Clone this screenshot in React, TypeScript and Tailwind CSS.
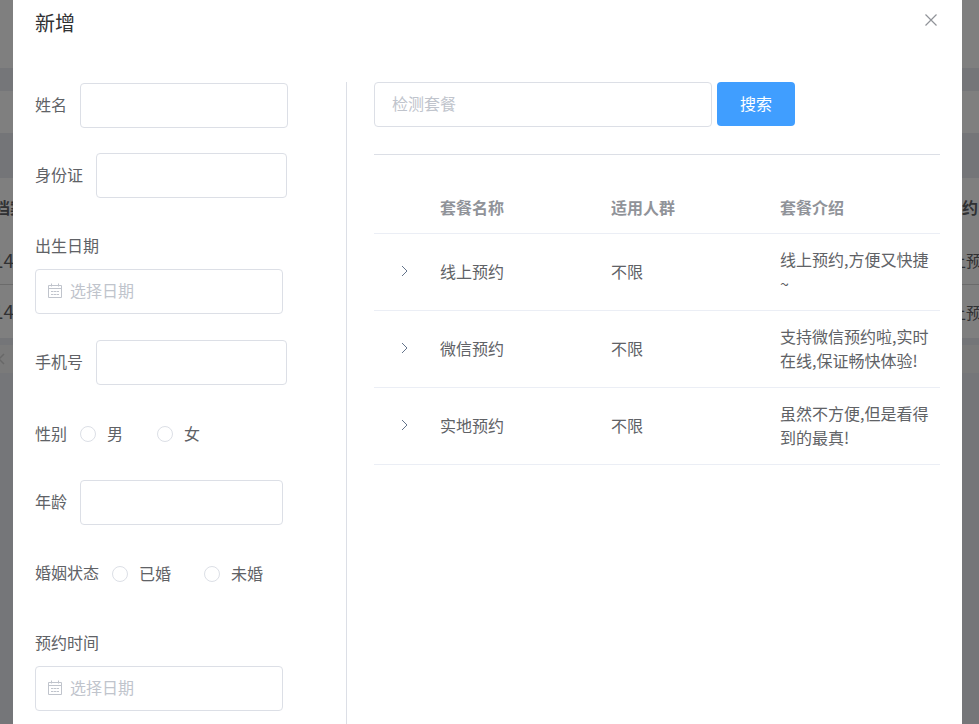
import React from "react";

const font = { fontFamily: '"Noto Sans CJK SC", "Liberation Sans", sans-serif' };

function Calendar() {
  return (
    <svg width="14" height="15" viewBox="0 0 14 15" fill="none" stroke="#c0c4cc" strokeWidth="1" className="shrink-0 -mt-[2px]">
      <path d="M0.5 2.5h13v12h-13z" />
      <path d="M0.5 5.5h13M3.5 0.5v3M10.5 0.5v3M3 8.5h2.5M6 8.5h2.5M9 8.5h2M3 11.5h2.5M6 11.5h2.5M9 11.5h2" />
    </svg>
  );
}

function Chevron() {
  return (
    <svg width="7" height="12" viewBox="0 0 7 12" fill="none" stroke="#64748b" strokeWidth="1">
      <path d="M1 1l5 5-5 5" />
    </svg>
  );
}

function TextRow({ label, labelClass, inputClass, className }: { label: string; labelClass: string; inputClass: string; className: string }) {
  return (
    <div className={`flex items-center h-[45px] ${className}`}>
      <label className={`text-base text-[#606266] -mt-[3px] ${labelClass}`}>{label}</label>
      <input className={`h-[45px] rounded border border-[#dcdfe6] bg-white outline-none ${inputClass}`} />
    </div>
  );
}

function DateBlock({ label, className }: { label: string; className: string }) {
  return (
    <div className={`flex flex-col ${className}`}>
      <div className="h-6 leading-6 text-base text-[#606266] -mt-px mb-px">{label}</div>
      <div className="mt-[11px] flex items-center gap-2 h-[45px] w-[248px] rounded border border-[#dcdfe6] pl-3">
        <Calendar />
        <input placeholder="选择日期" className="w-[150px] text-base outline-none placeholder:text-[#c0c4cc] -mt-[3px]" />
      </div>
    </div>
  );
}

function Radio({ text, className }: { text: string; className: string }) {
  return (
    <div className={`flex items-center ${className}`}>
      <span className="w-4 h-4 rounded-full border border-[#dcdfe6] bg-white" />
      <span className="ml-[11px] text-base text-[#606266] -mt-[2px]">{text}</span>
    </div>
  );
}

function PageBackdrop() {
  return (
    <div className="w-full text-base text-[#606266]">
      <div className="h-[68px] bg-white" />
      <div className="h-[23px] bg-[#eaecf2]" />
      <div className="h-[42px] bg-white" />
      <div className="h-[45px] bg-[#e9ebf1]" />
      <div className="h-[58px] flex items-center justify-between overflow-hidden bg-white font-bold">
        <span className="-ml-[6px]">档案</span>
        <span className="mr-px">约</span>
      </div>
      <div className="h-[49px] flex items-center justify-between overflow-hidden border-b border-[#d6d6d6] bg-white">
        <span className="-ml-[7px] text-[19px]">14</span>
        <span className="-mr-[19px]">上预约</span>
      </div>
      <div className="h-[53px] flex items-center justify-between overflow-hidden bg-white">
        <span className="-ml-[7px] text-[19px]">14</span>
        <span className="-mr-[19px]">上预约</span>
      </div>
      <div className="h-[7px] bg-[#e9ebf1]" />
      <div className="h-[28px] flex items-center overflow-hidden bg-[#f4f4f4]">
        <svg className="-ml-[3px]" width="8" height="12" viewBox="0 0 8 12" fill="none" stroke="#d0d0d0" strokeWidth="1.5"><path d="M7 1L2 6l5 5" /></svg>
      </div>
      <div className="h-[351px] bg-[#eaecf2]" />
    </div>
  );
}

const rows = [
  { name: "线上预约", crowd: "不限", intro: "线上预约,方便又快捷~" },
  { name: "微信预约", crowd: "不限", intro: "支持微信预约啦,实时在线,保证畅快体验!" },
  { name: "实地预约", crowd: "不限", intro: "虽然不方便,但是看得到的最真!" },
];

export default function App() {
  return (
    <div className="relative w-[979px] h-[724px] overflow-hidden bg-white" style={font}>
      <PageBackdrop />
      <div className="absolute inset-0 bg-black/50" />
      <div className="absolute left-[13px] top-0 w-[949px] h-[724px] bg-white flex flex-col">
        <div className="relative h-[82px] shrink-0 pl-[22px] pt-2">
          <div className="text-[20px] leading-[30px] text-[#303133]">新增</div>
          <svg className="absolute left-[912px] top-[14px]" width="12" height="12" viewBox="0 0 12 12" fill="none" stroke="#909399" strokeWidth="1.2">
            <path d="M0.5 0.5l11 11M11.5 0.5l-11 11" />
          </svg>
        </div>
        <div className="flex flex-1 min-h-0">
          <div className="w-[334px] shrink-0 pl-[22px] border-r border-[#dcdfe6]">
            <TextRow label="姓名" labelClass="w-[45px]" inputClass="w-[208px]" className="mt-px" />
            <TextRow label="身份证" labelClass="w-[61px]" inputClass="w-[191px]" className="mt-[25px]" />
            <DateBlock label="出生日期" className="mt-9" />
            <TextRow label="手机号" labelClass="w-[61px]" inputClass="w-[191px]" className="mt-[26px]" />
            <div className="mt-[37px] flex items-center h-6">
              <span className="w-[45px] text-base text-[#606266] -mt-[2px]">性别</span>
              <Radio text="男" className="w-[77px]" />
              <Radio text="女" className="" />
            </div>
            <TextRow label="年龄" labelClass="w-[45px]" inputClass="w-[203px]" className="mt-[34px]" />
            <div className="mt-[37px] flex items-center h-6">
              <span className="w-[77px] text-base text-[#606266] -mt-[4px]">婚姻状态</span>
              <Radio text="已婚" className="w-[92px]" />
              <Radio text="未婚" className="" />
            </div>
            <DateBlock label="预约时间" className="mt-[45px]" />
          </div>
          <div className="flex-1 pl-[27px] pr-[22px]">
            <div className="flex gap-[5px]">
              <input placeholder="检测套餐" className="w-[338px] h-[45px] rounded border border-[#dcdfe6] pl-[17px] pb-[3px] text-base outline-none placeholder:text-[#c0c4cc]" />
              <button className="w-[78px] h-[44px] rounded bg-[#409eff] text-base text-white pb-[2px]">搜索</button>
            </div>
            <div className="mt-[27px] h-px bg-[#dcdfe6]" />
            <div className="grid grid-cols-[66px_171px_169px_160px] h-[79px] border-b border-[#ebeef5] items-center pt-[25px] text-base font-bold text-[#909399]">
              <span />
              <span>套餐名称</span>
              <span>适用人群</span>
              <span>套餐介绍</span>
            </div>
            {rows.map((r) => (
              <div key={r.name} className="grid grid-cols-[66px_171px_169px_160px] h-[77px] border-b border-[#ebeef5] items-center text-base text-[#606266]">
                <span className="pl-[27px] flex items-center -mt-[2px]"><Chevron /></span>
                <span className="-mt-[2px]">{r.name}</span>
                <span className="-mt-[2px]">{r.crowd}</span>
                <span className="w-[152px] leading-6 -mt-[2px]">{r.intro}</span>
              </div>
            ))}
          </div>
        </div>
      </div>
    </div>
  );
}
